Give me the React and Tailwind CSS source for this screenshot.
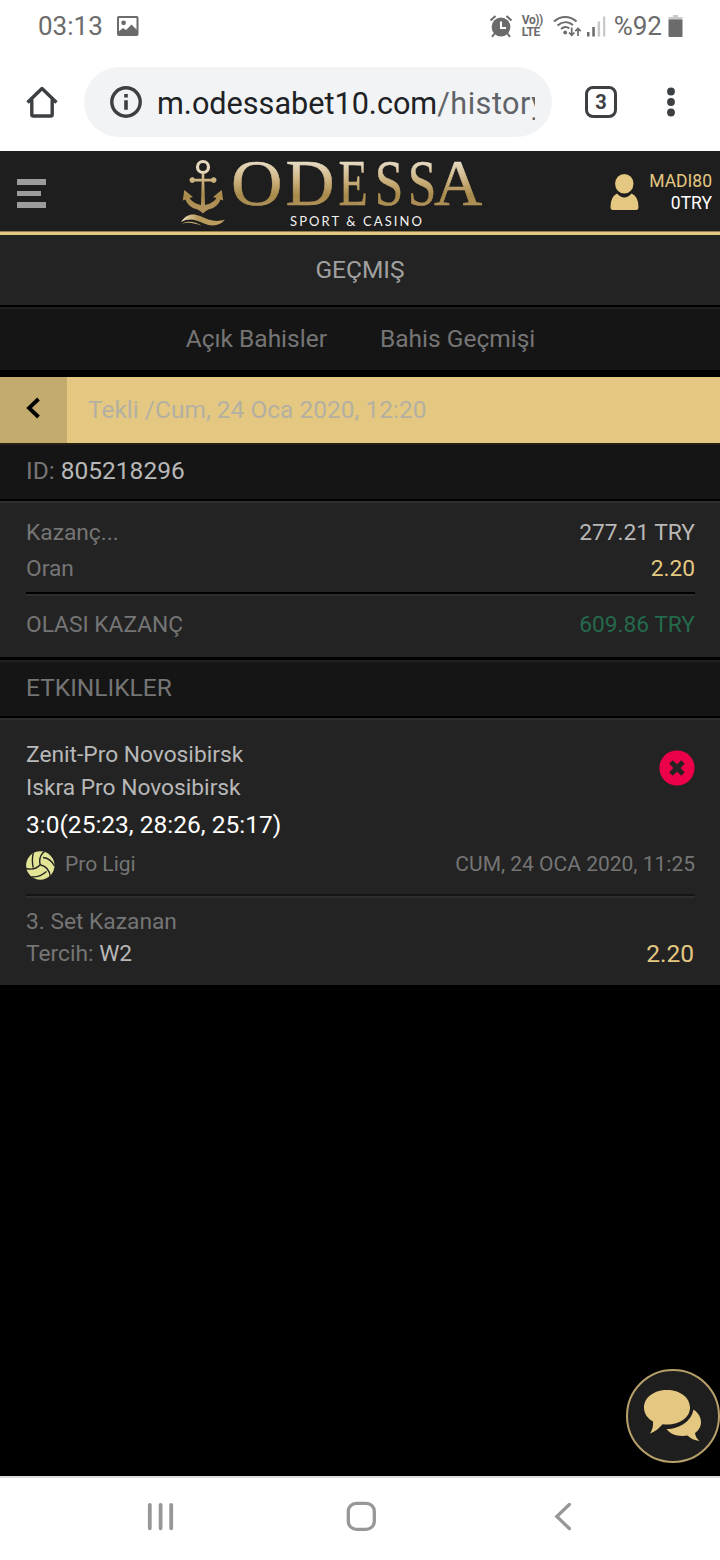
function StatusBar() {
    return (
        <div className="flex h-[52px] items-center justify-between pl-[38px] pr-[37px] text-[26px] leading-none text-[#6b6b6b]">
            <div className="flex items-center gap-[14px]">
                <span>03:13</span>
                <svg width="22" height="20" viewBox="0 0 22 20" className="-mt-[1px]">
                    <rect x="1" y="1" width="19.5" height="18" rx="0.8" fill="none" stroke="#6b6b6b" strokeWidth="2" />
                    <circle cx="6.6" cy="6.8" r="2.4" fill="#6b6b6b" />
                    <path d="M1 16l5-4 3 2 5.500-5.500 6 6V19H1z" fill="#6b6b6b" />
                </svg>
            </div>
            <div className="flex items-center">
                <svg width="24" height="24" viewBox="0 0 24 24" className="mr-[9px]" fill="none" stroke="#6b6b6b">
                    <circle cx="12" cy="13" r="9.400" fill="#6b6b6b" stroke="none" />
                    <path d="M1.500 6.500l5-4.500M22.500 6.500l-5-4.500M6 19l-3 3.800M18 19l3 3.800" strokeWidth="2" />
                    <path d="M12 7.500V14h5" stroke="#fff" strokeWidth="2" />
                </svg>
                <div className="mr-[10px] flex w-[21px] flex-col text-[12px] font-bold leading-[12px] tracking-[-0.4px]">
                    <span>Vo))</span>
                    <span>LTE</span>
                </div>
                <svg width="29" height="24" viewBox="0 0 29 24" fill="none" stroke="#6b6b6b" strokeWidth="2">
                    <path d="M1 7.500C7.500 1.500 17 1.500 23.500 7.500M4.500 11.500c5-4.400 11-4.400 15.500-.5M8 15c2.600-2.300 6-2.300 8.300-.6" />
                    <circle cx="12.200" cy="18.500" r="1.900" fill="#6b6b6b" stroke="none" />
                    <path d="M18.700 13.500V21M16 18.500l2.700 2.800 2.700-2.800M25 22v-7.500M22.300 17.200l2.700-2.800 2.700 2.800" strokeWidth="1.700" />
                </svg>
                <svg width="19" height="22" viewBox="0 0 19 22" className="ml-[5px] mr-[8px]">
                    <path d="M0 17h2.500v4.500H0zM5.300 12h2.500v9.500H5.300z" fill="#6b6b6b" />
                    <path d="M10.600 6.500h2.500v15h-2.500zM16 1.500h2.300v20H16z" fill="#c9c9c9" />
                </svg>
                <span>%92</span>
                <svg width="15" height="22" viewBox="0 0 15 22" className="ml-[6px]">
                    <path d="M5 0h5v2h4.500v3H.5V2H5z" fill="#c9c9c9" />
                    <rect x="0.500" y="4.500" width="14" height="17.500" rx="1" fill="#6b6b6b" />
                </svg>
            </div>
        </div>
    )
}

function BrowserBar() {
    return (
        <div className="flex h-[99px] items-start pt-[15px]">
            <svg width="32" height="32" viewBox="0 0 32 32" className="ml-[26px] mt-[19px]" fill="none" stroke="#3c4043" strokeWidth="3.400" strokeLinejoin="round">
                <path d="M1.500 16.500L16 2.500l14.500 14M5.800 13.500V28.500a1.500 1.500 0 0 0 1.500 1.500H24.700a1.500 1.500 0 0 0 1.500-1.500V13.500" />
            </svg>
            <div className="ml-[26px] flex h-[70px] w-[468px] items-center rounded-full bg-[#f1f3f5] pl-[26px]">
                <svg width="32" height="32" viewBox="0 0 32 32">
                    <circle cx="16" cy="16" r="14.200" fill="none" stroke="#3c4043" strokeWidth="3.400" />
                    <path d="M14.200 8h3.600v3.600h-3.600zM14.200 14.200h3.600v9.600h-3.600z" fill="#3c4043" />
                </svg>
                <div className="ml-[15px] h-[36px] w-[378px] overflow-hidden whitespace-nowrap text-[30.600px] leading-[40px] text-[#202124]">
                    m.odessabet10.com<span className="tracking-[0.5px] text-[#5f6368]">/history</span>
                </div>
            </div>
            <div className="ml-[33px] mt-[19px] flex h-[32px] w-[32px] items-center justify-center rounded-[8px] border-[3.5px] border-[#3c4043] text-[20px] font-bold leading-none text-[#3c4043]">3</div>
            <svg width="10" height="32" viewBox="0 0 10 32" className="ml-[49px] mt-[19px]" fill="#3c4043">
                <circle cx="5" cy="5.500" r="3.900" />
                <circle cx="5" cy="16" r="3.900" />
                <circle cx="5" cy="26.500" r="3.900" />
            </svg>
        </div>
    )
}

function Logo() {
    const letters = [
        { ch: "O", x: 231, len: 51.5 },
        { ch: "D", x: 285.5, len: 49 },
        { ch: "E", x: 338.6, len: 29.3 },
        { ch: "S", x: 374.8, len: 28.6 },
        { ch: "S", x: 407.8, len: 28.6 },
        { ch: "A", x: 434, len: 48.3 },
    ]

    return (
        <svg width="304" height="76" viewBox="180 155 304 76" className="overflow-visible">
            <defs>
                <linearGradient id="gold" gradientUnits="userSpaceOnUse" x1="0" y1="160" x2="0" y2="207">
                    <stop offset="0" stopColor="#eadfca" />
                    <stop offset="0.45" stopColor="#cbb07c" />
                    <stop offset="0.75" stopColor="#a88a4b" />
                    <stop offset="1" stopColor="#b0925a" />
                </linearGradient>
                <linearGradient id="wave" x1="0" y1="0" x2="1" y2="0">
                    <stop offset="0" stopColor="#efe0bd" />
                    <stop offset="0.4" stopColor="#b6985a" />
                    <stop offset="1" stopColor="#c0a060" />
                </linearGradient>
            </defs>
            <g fill="url(#gold)">
                <circle cx="203" cy="167" r="5.500" fill="none" stroke="#e6d8bd" strokeWidth="3.200" />
                <path d="M201.700 173.500h2.600v5.200h7a2.800 2.800 0 1 1 0 2.800h-7l.7 23.500C210 204 215 201 216.500 198L213 197l8.700-7 1.500 10.500-2.700-1C218 206 214 208 209 209.300Q205 211 203 213.500 201 211 197 209.300C192 208 188 206 185.500 199.500l-2.700 1 1.500-10.500 8.700 7-3.500 1c1.500 3 6.500 6 11.500 7l.7-23.500h-7a2.800 2.800 0 1 1 0-2.800h7z" />
                {letters.map((l, i) => (
                    <text key={i} x={l.x} y="205.300" textLength={l.len} lengthAdjust="spacingAndGlyphs" fontSize="66" fontFamily="Liberation Serif, serif" stroke="url(#gold)" strokeWidth="0.5">{l.ch}</text>
                ))}
            </g>
            <path d="M181 222c5-8 12-9 19-6 8 3.500 15 7 25 3.500-5 6.500-13 7.500-21 4-8-4-15-6-23-1.500z" fill="url(#wave)" />
            <path d="M182 223.700c6-3.500 13-2 20 2-7-2-13-4-20-2z" fill="#c9ad70" />
            <text x="290" y="226" textLength="132" fontSize="13" fontFamily="Lato, sans-serif" fill="#f2f2f2">SPORT &amp; CASINO</text>
        </svg>
    )
}

function Header() {
    return (
        <header className="flex h-[80px] items-start justify-between bg-[#1e1e1e] pl-[17px] pr-[8px]">
            <div className="mt-[28px] flex w-[163px] flex-col gap-[6px]">
                <span className="h-[5.500px] w-[29px] bg-[#9c9c9c]" />
                <span className="h-[5.500px] w-[24px] bg-[#9c9c9c]" />
                <span className="h-[5.500px] w-[29px] bg-[#9c9c9c]" />
            </div>
            <div className="mt-[4px] w-[304px]"><Logo /></div>
            <div className="mt-[19px] flex flex-1 justify-end gap-[10px] text-right text-[17.500px] leading-[22px]">
                <svg width="29" height="37" viewBox="0 0 29 37" className="mt-[4px]" fill="#e4c881">
                    <ellipse cx="14.300" cy="9.800" rx="9.200" ry="9.800" />
                    <path d="M7 19.500q7.300 8 14.600 0 6.900 3 6.900 13.500 0 3-2.500 3H3q-2.500 0-2.500-3Q.5 22.500 7 19.500z" />
                </svg>
                <div>
                    <div className="text-[#e4c881]">MADI80</div>
                    <div className="text-white">0TRY</div>
                </div>
            </div>
        </header>
    )
}

function Row({ label, value, valueClass }) {
    return (
        <div className="flex h-[36px] items-center justify-between">
            <span>{label}</span>
            <span className={valueClass}>{value}</span>
        </div>
    )
}

function Volleyball() {
    return (
        <svg width="29" height="29" viewBox="0 0 29 29" fill="none" stroke="#232323" strokeWidth="1.400">
            <circle cx="14.300" cy="14.500" r="14.200" fill="#e2e596" stroke="none" />
            <path d="M18.500 .5C14 4 13 9 14.200 13.800C10 18.500 5 18.800 .2 17.500M14.200 13.800c5 1.200 9.500 5 10 12" />
            <path d="M7.300 2C6 7 6.200 12 7.200 16.500M17 6.500c4.500.500 9 3.500 11.500 8.500M20.500 20.500C16 24.500 11 26.300 5.500 25.800" />
        </svg>
    )
}

function BetHistory() {
    return (
        <main className="text-[#757575]">
            <div className="h-[70px] bg-[#232323] text-center text-[24.500px] leading-[70px] text-[#a0a0a0]">GEÇMIŞ</div>
            <div className="mt-[2px] flex h-[63px] items-center justify-center gap-[53px] border-t-2 border-[#202020] bg-[#151515] pl-[1px] text-[24.500px]">
                <span>Açık Bahisler</span>
                <span>Bahis Geçmişi</span>
            </div>

            <div className="mt-[7px] flex h-[66px] items-center bg-[#e4c881] text-[24.500px] text-[#b3b0a3]">
                <div className="flex h-full w-[67px] items-center justify-center bg-[#c3ab6e]">
                    <svg width="14" height="22" viewBox="0 0 14 22" className="-mt-[4px] mr-[2px]" fill="none" stroke="#000" strokeWidth="3.800">
                        <path d="M12.500 2L3 11l9.500 9" />
                    </svg>
                </div>
                <span className="ml-[21px]">Tekli /Cum, 24 Oca 2020, 12:20</span>
            </div>
            <div className="h-[56px] border-t-2 border-[#272013] bg-[#151515] pl-[26px] text-[24.500px] leading-[51px]">
                ID: <span className="text-[#b8b8b8]">805218296</span>
            </div>

            <div className="mt-[2px] border-t-2 border-[#2e2e2e] bg-[#232323] pl-[26px] pr-[25px] pt-[12px] text-[22.750px]">
                <Row label="Kazanç..." value="277.21 TRY" valueClass="text-[#b8b8b8]" />
                <Row label="Oran" value="2.20" valueClass="text-[#e4c881]" />
                <div className="mt-[5px] h-[4px] border-b-2 border-[#2e2e2e] bg-black" />
                <div className="flex h-[61px] items-center justify-between pb-[3px]">
                    <span>OLASI KAZANÇ</span>
                    <span className="text-[#246a4c]">609.86 TRY</span>
                </div>
            </div>

            <div className="mt-[3px] h-[56px] border-t-2 border-[#202020] bg-[#151515] pl-[26px] text-[24.500px] leading-[51px]">ETKINLIKLER</div>

            <div className="mt-[2px] h-[267px] border-t-2 border-[#2e2e2e] bg-[#232323] pl-[26px] pr-[25px] pt-[17px] text-[22.750px]">
                <div className="flex items-start justify-between text-[#b8b8b8]">
                    <div>
                        <div className="h-[34px] leading-[36px]">Zenit-Pro Novosibirsk</div>
                        <div className="h-[33px] leading-[33px]">Iskra Pro Novosibirsk</div>
                    </div>
                    <svg width="36" height="36" viewBox="0 0 36 36" className="mt-[13px]">
                        <circle cx="18" cy="18" r="17.600" fill="#eb0049" />
                        <path d="M12 12l12 12M24 12L12 24" stroke="#232323" strokeWidth="5" />
                    </svg>
                </div>
                <div className="h-[42px] text-[24.500px] leading-[42px] text-white">3:0(25:23, 28:26, 25:17)</div>
                <div className="flex h-[35px] items-center text-[21px]">
                    <div className="mt-[3px]"><Volleyball /></div>
                    <span className="ml-[10px] flex-1 pt-[2px]">Pro Ligi</span>
                    <span className="pt-[2px]">CUM, 24 OCA 2020, 11:25</span>
                </div>
                <div className="mt-[13px] h-[4px] border-b-2 border-[#2e2e2e] bg-[#151515]" />
                <div className="mt-[7px] h-[32px] leading-[34px]">3. Set Kazanan</div>
                <div className="flex h-[33px] items-center justify-between">
                    <span className="pt-[2px]">Tercih: <span className="text-[#b8b8b8]">W2</span></span>
                    <span className="pr-[1px] pt-[1px] text-[24.500px] text-[#e4c881]">2.20</span>
                </div>
            </div>
        </main>
    )
}

function ChatButton() {
    return (
        <div className="absolute left-[626px] top-[1369px] flex h-[94px] w-[94px] items-center justify-center rounded-full border-2 border-[#b8a06a] bg-[#1e1e1e]">
            <svg width="60" height="54" viewBox="0 0 60 54" fill="#e4c881">
                <path d="M24 1c13 0 23 7.500 23 17.500S37 35.500 24 35.500c-1.500 0-3 0-4.500-.3C16 39.500 11.500 43 7 44.500c2-3 3.500-7 3-12C4.500 29.500 1 24.500 1 18.500 1 8.500 11 1 24 1z" />
                <path d="M50.500 20.500c9 6 10.500 17 1.500 23.500.3 3 2 6 4.500 8-5-.5-9-2.500-12-5.500-9 1.500-17-1-21-6.500C37 40 48.500 32 50.500 20.500z" />
            </svg>
        </div>
    )
}

function NavBar() {
    return (
        <div className="flex h-[84px] items-start justify-between border-t-2 border-[#dedede] bg-white pl-[147px] pr-[148px] pt-[23px]">
            <svg width="28" height="32" viewBox="0 0 28 32" stroke="#979797" strokeWidth="3.800" strokeLinecap="round">
                <path d="M2.800 3.800v23.500M13.600 3.800v23.500M24.200 3.800v23.500" />
            </svg>
            <svg width="32" height="32" viewBox="0 0 32 32" className="mr-[5px]" fill="none" stroke="#979797" strokeWidth="3.300">
                <rect x="2.300" y="2.300" width="26" height="26" rx="8" />
            </svg>
            <svg width="18" height="32" viewBox="0 0 18 32" fill="none" stroke="#979797" strokeWidth="3.300" strokeLinecap="round">
                <path d="M15.300 3.500L2.800 15.500l12.500 12" />
            </svg>
        </div>
    )
}

function App() {
    return (
        <div className="relative flex h-[1560px] w-[720px] flex-col overflow-hidden bg-black font-['Roboto',sans-serif]">
            <div className="bg-white">
                <StatusBar />
                <BrowserBar />
            </div>
            <Header />
            <div className="h-[4px] border-t border-[#8f7d4e] bg-[#e4c881]" />
            <div className="flex-1">
                <BetHistory />
            </div>
            <ChatButton />
            <NavBar />
        </div>
    )
}

export default App;
